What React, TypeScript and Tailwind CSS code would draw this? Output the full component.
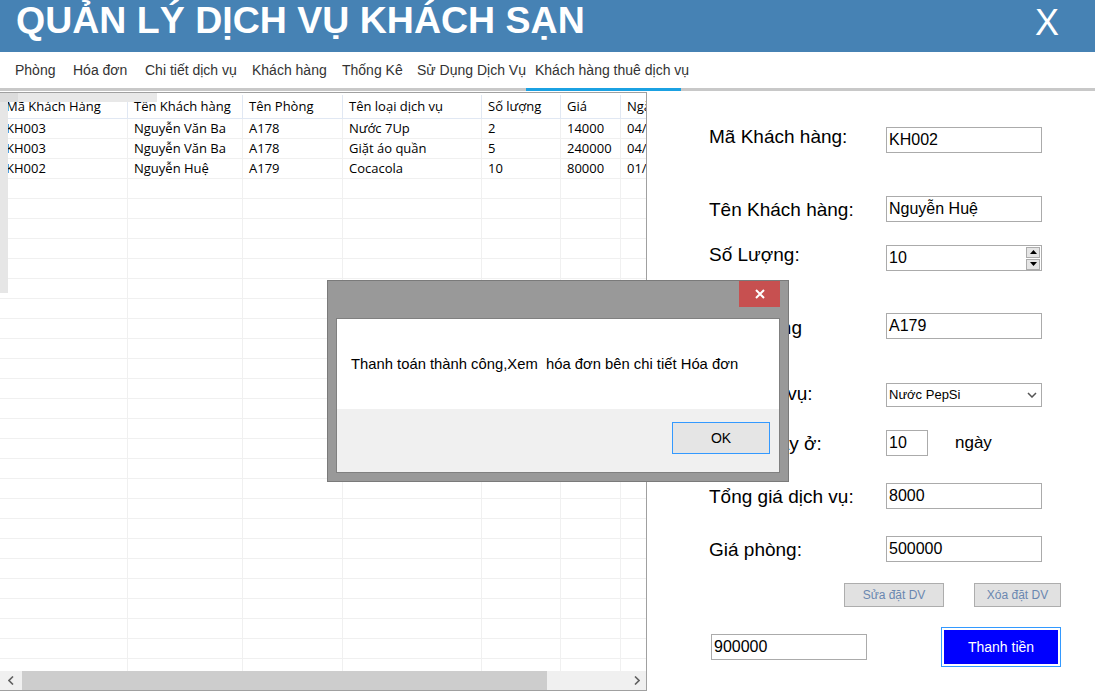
import React from "react";

const tabs = [
  { t: "Phòng", w: "w-[58px]" },
  { t: "Hóa đơn", w: "w-[72px]" },
  { t: "Chi tiết dịch vụ", w: "w-[107px]" },
  { t: "Khách hàng", w: "w-[90px]" },
  { t: "Thống Kê", w: "w-[75px]" },
  { t: "Sử Dụng Dịch Vụ", w: "w-[118px]" },
  { t: "Khách hàng thuê dịch vụ", w: "w-auto" },
];

const cols = [
  { title: "Mã Khách Hàng", w: "w-[128px]" },
  { title: "Tên Khách hàng", w: "w-[115px]" },
  { title: "Tên Phòng", w: "w-[100px]" },
  { title: "Tên loại dịch vụ", w: "w-[139px]" },
  { title: "Số lượng", w: "w-[79px]" },
  { title: "Giá", w: "w-[60px]" },
  { title: "Ngày", w: "w-[60px]" },
];

const rows = [
  ["KH003", "Nguyễn Văn Ba", "A178", "Nước 7Up", "2", "14000", "04/5/2019"],
  ["KH003", "Nguyễn Văn Ba", "A178", "Giặt áo quần", "5", "240000", "04/5/2019"],
  ["KH002", "Nguyễn Huệ", "A179", "Cocacola", "10", "80000", "01/5/2019"],
];

const empty = Array.from({ length: 25 }, () => ["", "", "", "", "", "", ""]);

function Box({ value, className = "w-[156px]" }: { value: string; className?: string }) {
  return (
    <div
      className={`${className} h-[26px] border border-[#ababab] bg-white flex items-center pl-[2px] text-[16px] text-black`}
    >
      {value}
    </div>
  );
}

// lead moves the label text up or down inside its 26px line box
function Field({
  label,
  mt,
  lead = "leading-[28px]",
  children,
}: {
  label: string;
  mt: string;
  lead?: string;
  children: React.ReactNode;
}) {
  return (
    <div className={`flex items-center ${mt}`}>
      <div className={`w-[177px] h-[26px] text-[19px] text-black whitespace-nowrap ${lead}`}>{label}</div>
      {children}
    </div>
  );
}

export default function App() {
  return (
    <div className="relative w-[1095px] h-[694px] overflow-hidden bg-white font-['Liberation_Sans',Arial,sans-serif]">
      {/* header */}
      <div className="h-[52px] bg-[#4682b4] flex items-center justify-between pl-[16px] pr-[36px]">
        <h1 className="text-[37.5px] font-bold text-white leading-none -mt-[10px]">QUẢN LÝ DỊCH VỤ KHÁCH SẠN</h1>
        <span className="text-[36px] text-white leading-none -mt-[6px]">X</span>
      </div>

      {/* tabs */}
      <div className="h-[36px] flex items-center pl-[15px] text-[14px] text-[#333]">
        {tabs.map((t) => (
          <span key={t.t} className={`${t.w} shrink-0 whitespace-nowrap`}>
            {t.t}
          </span>
        ))}
      </div>
      <div className="h-[3px] bg-[#c8c8c8] flex">
        <div className="w-[526px]" />
        <div className="w-[155px] bg-[#1ba1e2]" />
      </div>

      <div className="flex">
        {/* grid */}
        <div className="relative mt-px w-[647px] h-[599px] border-t border-r border-b border-[#a0a0a0] flex flex-col overflow-hidden font-['Open_Sans',sans-serif] text-[13px] text-black">
          <div className="flex-1 overflow-hidden">
            <div className="flex h-[26px] pt-[2px] border-b border-[#e1e8f3] w-[760px]">
              {cols.map((c) => (
                <div
                  key={c.title}
                  className={`${c.w} shrink-0 border-r border-[#e1e8f3] pl-[6px] flex items-center whitespace-nowrap`}
                >
                  {c.title}
                </div>
              ))}
            </div>
            {[...rows, ...empty].map((r, i) => (
              <div key={i} className="flex h-[20px] border-b border-[#f0f0f0] w-[760px]">
                {r.map((v, j) => (
                  <div
                    key={j}
                    className={`${cols[j].w} shrink-0 border-r border-[#f0f0f0] pl-[6px] flex items-center whitespace-nowrap overflow-hidden`}
                  >
                    {v}
                  </div>
                ))}
              </div>
            ))}
          </div>
          {/* horizontal scrollbar */}
          <div className="h-[19px] bg-[#f0f0f0] flex items-center shrink-0">
            <div className="w-[22px] flex justify-center">
              <svg width="6" height="9" viewBox="0 0 6 9">
                <path d="M5 0.5 L1 4.5 L5 8.5" stroke="#606060" strokeWidth="1.6" fill="none" />
              </svg>
            </div>
            <div className="w-[525px] h-[19px] bg-[#cdcdcd]" />
            <div className="flex-1 flex justify-end pr-[6px]">
              <svg width="6" height="9" viewBox="0 0 6 9">
                <path d="M1 0.5 L5 4.5 L1 8.5" stroke="#606060" strokeWidth="1.6" fill="none" />
              </svg>
            </div>
          </div>
          {/* panel artifacts lying over the grid */}
          <div className="absolute left-0 top-0 w-[157px] h-[9px] bg-[#e8e8e8] flex">
            <div className="w-[18px] bg-[#dcdcdc]" />
          </div>
          <div className="absolute left-0 top-[9px] w-[8px] h-[191px] bg-[#e6e6e6]" />
        </div>

        {/* form */}
        <div className="flex flex-col pl-[62px] pt-[36px]">
          <Field label="Mã Khách hàng:" mt="mt-0" lead="leading-[19px]">
            <Box value="KH002" />
          </Field>
          <Field label="Tên Khách hàng:" mt="mt-[43px]">
            <Box value="Nguyễn Huệ" />
          </Field>
          <Field label="Số Lượng:" mt="mt-[23px]" lead="leading-[19px]">
            <div className="w-[156px] h-[26px] border border-[#ababab] bg-white flex items-center pl-[2px] pr-px text-[16px]">
              <span className="flex-1">10</span>
              <div className="flex flex-col gap-px">
                <div className="w-[14px] h-[11px] bg-[#e5e5e5] border border-[#acacac] flex items-center justify-center">
                  <svg width="7" height="4" viewBox="0 0 7 4">
                    <path d="M0 4 L3.5 0 L7 4 Z" fill="#000" />
                  </svg>
                </div>
                <div className="w-[14px] h-[11px] bg-[#e5e5e5] border border-[#acacac] flex items-center justify-center">
                  <svg width="7" height="4" viewBox="0 0 7 4">
                    <path d="M0 0 L3.5 4 L7 0 Z" fill="#000" />
                  </svg>
                </div>
              </div>
            </div>
          </Field>
          <Field label="Tên Phòng" mt="mt-[42px]" lead="leading-[29px]">
            <Box value="A179" />
          </Field>
          <Field label="Tên dịch vụ:" mt="mt-[43px]" lead="leading-[23px]">
            <div className="w-[156px] h-[24px] border border-[#ababab] bg-white flex items-center pl-[2px] pr-[4px] text-[13px] text-black">
              <span className="flex-1">Nước PepSi</span>
              <svg width="10" height="6" viewBox="0 0 10 6">
                <path d="M1 1 L5 5 L9 1" stroke="#555" strokeWidth="1.5" fill="none" />
              </svg>
            </div>
          </Field>
          <div className="flex items-center mt-[22px]">
            <div className="w-[177px] h-[26px] leading-[28px] text-[19px] text-black">Tổng ngày ở:</div>
            <Box value="10" className="w-[42px]" />
            <span className="ml-[27px] h-[26px] leading-[26px] text-[17px] text-black">ngày</span>
          </div>
          <Field label="Tổng giá dịch vụ:" mt="mt-[27px]">
            <Box value="8000" />
          </Field>
          <Field label="Giá phòng:" mt="mt-[27px]">
            <Box value="500000" />
          </Field>
          <div className="flex mt-[21px] pl-[135px] gap-[30px]">
            <div className="w-[100px] h-[24px] bg-[#e1e1e1] border border-[#adadad] flex items-center justify-center text-[12px] text-[#6a87b0]">
              Sửa đặt DV
            </div>
            <div className="w-[87px] h-[24px] bg-[#e1e1e1] border border-[#adadad] flex items-center justify-center text-[12px] text-[#6a87b0]">
              Xóa đặt DV
            </div>
          </div>
          <div className="flex items-center mt-[20px] pl-[2px]">
            <Box value="900000" />
            <div className="ml-[74px] w-[120px] h-[40px] border border-[#3399ff] p-[2px]">
              <div className="w-full h-full bg-[#0000ff] flex items-center justify-center text-white text-[14px]">
                Thanh tiền
              </div>
            </div>
          </div>
        </div>
      </div>

      {/* message box over the page */}
      <div className="absolute left-[327px] top-[280px] w-[462px] h-[202px] bg-[#999999] border border-[#7a7a7a] px-[8px] pb-[8px] flex flex-col">
        <div className="h-[37px] flex justify-end items-start">
          <div className="w-[41px] h-[26px] bg-[#c75050] flex items-center justify-center">
            <svg width="10" height="10" viewBox="0 0 10 10">
              <path d="M1 1 L9 9 M9 1 L1 9" stroke="#fff" strokeWidth="2" />
            </svg>
          </div>
        </div>
        <div className="flex-1 flex flex-col bg-[#f0f0f0] border border-[#808080]">
          <div className="h-[90px] bg-white flex items-center pl-[14px] text-[14.8px] text-black whitespace-pre">
            {"Thanh toán thành công,Xem  hóa đơn bên chi tiết Hóa đơn"}
          </div>
          <div className="flex-1 flex justify-end items-start pt-[13px] pr-[9px]">
            <div className="w-[98px] h-[32px] border border-[#3399ff] bg-[#e5e5e5] flex items-center justify-center text-[14px] text-black">
              OK
            </div>
          </div>
        </div>
      </div>
    </div>
  );
}
